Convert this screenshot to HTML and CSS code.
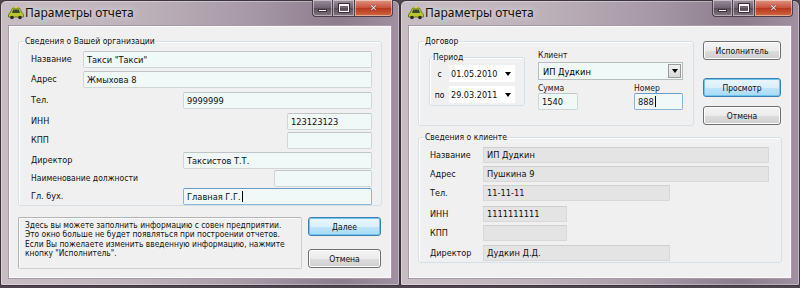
FILE: index.html
```html
<!DOCTYPE html>
<html lang="ru">
<head>
<meta charset="utf-8">
<title>Параметры отчета</title>
<link rel="stylesheet" href="styles.css">
</head>
<body>
<div class="desk">
  <div class="win">
    <div class="titlebar">
      <svg class="appicon" width="16" height="14" viewBox="0 0 16 14">
        <path d="M2 7 L4 3 Q4.5 2 6 2 L10 2 Q11.5 2 12 3 L14 7 Q15.5 7.5 15.5 9 L15.5 11 L0.5 11 L0.5 9 Q0.5 7.5 2 7 Z" fill="#b8c832" stroke="#5a6a10" stroke-width="0.8"/>
        <path d="M4 7 L5.2 3.6 L10.8 3.6 L12 7 Z" fill="#3c4a2a"/>
        <circle cx="4" cy="11.5" r="1.8" fill="#2a2a2a"/>
        <circle cx="12" cy="11.5" r="1.8" fill="#2a2a2a"/>
        <rect x="6.5" y="0.5" width="3" height="1.5" fill="#e8d040"/>
      </svg>
      <span class="title">Параметры отчета</span>
      <div class="ctrls">
        <span class="cb cb-min"><i class="g-min"></i></span>
        <span class="cb cb-max"><i class="g-max"></i></span>
        <span class="cb cb-close"><i class="g-x">✕</i></span>
      </div>
    </div>
    <div class="client client-left">
      <fieldset class="group org">
        <legend>Сведения о Вашей организации</legend>
        <div class="rows">
          <div class="row"><span class="lbl">Название</span><span class="edit w-full">Такси "Такси"</span></div>
          <div class="row"><span class="lbl">Адрес</span><span class="edit w-full">Жмыхова 8</span></div>
          <div class="row"><span class="lbl">Тел.</span><span class="edit w-mid">9999999</span></div>
          <div class="row"><span class="lbl">ИНН</span><span class="edit w-sm">123123123</span></div>
          <div class="row"><span class="lbl">КПП</span><span class="edit w-sm"></span></div>
          <div class="row"><span class="lbl">Директор</span><span class="edit w-mid">Таксистов Т.Т.</span></div>
          <div class="row"><span class="lbl lbl-long">Наименование должности</span><span class="edit w-pos"></span></div>
          <div class="row"><span class="lbl">Гл. бух.</span><span class="edit w-mid focus">Главная Г.Г.<span class="caret"></span></span></div>
        </div>
      </fieldset>
      <div class="bottom">
        <div class="info">Здесь вы можете заполнить информацию с совен предприятии.<br>Это окно больше не будет появляться при построении отчетов.<br>Если Вы пожелаете изменить введенную информацию, нажмите<br>кнопку "Исполнитель".</div>
        <div class="btncol">
          <span class="btn default">Далее</span>
          <span class="btn">Отмена</span>
        </div>
      </div>
    </div>
  </div>

  <div class="win">
    <div class="titlebar">
      <svg class="appicon" width="16" height="14" viewBox="0 0 16 14">
        <path d="M2 7 L4 3 Q4.5 2 6 2 L10 2 Q11.5 2 12 3 L14 7 Q15.5 7.5 15.5 9 L15.5 11 L0.5 11 L0.5 9 Q0.5 7.5 2 7 Z" fill="#b8c832" stroke="#5a6a10" stroke-width="0.8"/>
        <path d="M4 7 L5.2 3.6 L10.8 3.6 L12 7 Z" fill="#3c4a2a"/>
        <circle cx="4" cy="11.5" r="1.8" fill="#2a2a2a"/>
        <circle cx="12" cy="11.5" r="1.8" fill="#2a2a2a"/>
        <rect x="6.5" y="0.5" width="3" height="1.5" fill="#e8d040"/>
      </svg>
      <span class="title">Параметры отчета</span>
      <div class="ctrls">
        <span class="cb cb-min"><i class="g-min"></i></span>
        <span class="cb cb-max"><i class="g-max"></i></span>
        <span class="cb cb-close"><i class="g-x">✕</i></span>
      </div>
    </div>
    <div class="client client-right">
      <div class="top">
        <fieldset class="group contract">
          <legend>Договор</legend>
          <div class="contract-body">
            <fieldset class="group period">
              <legend>Период</legend>
              <div class="prow"><span class="plbl">с</span><span class="picker">01.05.2010<span class="arr"></span></span></div>
              <div class="prow"><span class="plbl">по</span><span class="picker">29.03.2011<span class="arr"></span></span></div>
            </fieldset>
            <div class="clientcol">
              <span class="clbl">Клиент</span>
              <span class="combo">ИП Дудкин<span class="dd"><span class="arr"></span></span></span>
              <div class="sumrow">
                <div class="fcol"><span class="clbl">Сумма</span><span class="edit w-sum">1540</span></div>
                <div class="fcol"><span class="clbl">Номер</span><span class="edit w-num focus">888<span class="caret"></span></span></div>
              </div>
            </div>
          </div>
        </fieldset>
        <div class="btncol2">
          <span class="btn">Исполнитель</span>
          <span class="btn default">Просмотр</span>
          <span class="btn">Отмена</span>
        </div>
      </div>
      <fieldset class="group cinfo">
        <legend>Сведения о клиенте</legend>
        <div class="rows2">
          <div class="row"><span class="lbl">Название</span><span class="ro r-full">ИП Дудкин</span></div>
          <div class="row"><span class="lbl">Адрес</span><span class="ro r-full">Пушкина 9</span></div>
          <div class="row"><span class="lbl">Тел.</span><span class="ro r-mid">11-11-11</span></div>
          <div class="row"><span class="lbl">ИНН</span><span class="ro r-sm">1111111111</span></div>
          <div class="row"><span class="lbl">КПП</span><span class="ro r-sm"></span></div>
          <div class="row"><span class="lbl">Директор</span><span class="ro r-mid">Дудкин Д.Д.</span></div>
        </div>
      </fieldset>
    </div>
  </div>
</div>
</body>
</html>
```
FILE: styles.css
```css
* { box-sizing: border-box; }
html, body { margin: 0; padding: 0; }
body {
  width: 800px;
  height: 288px;
  overflow: hidden;
  background: #4e464e;
  font-family: "DejaVu Sans Condensed", "DejaVu Sans", sans-serif;
  font-size: 8.5px;
  color: #000;
}
.desk { display: flex; width: 800px; height: 288px; }

.win {
  width: 400px;
  height: 286px;
  padding: 0 7px 0 7px;
  display: flex;
  flex-direction: column;
  border: 1px solid #3e343e;
  border-radius: 6px 6px 2px 2px;
  box-shadow: inset 0 0 0 1px rgba(255,255,255,0.35);
  background:
    linear-gradient(to right, #c6bec2 0%, #bdb2ba 35%, #a596a4 65%, #8c7c8c 85%, #a090a0 100%);
}

.titlebar {
  height: 24px;
  display: flex;
  align-items: flex-start;
  flex: none;
}
.appicon { margin: 5px 0 0 0; flex: none; }
.title {
  margin: 5px 0 0 1px;
  font-family: "Noto Sans", "Open Sans", sans-serif;
  font-size: 12px;
  line-height: 14px;
  color: #101010;
  text-shadow: 0 0 6px rgba(255,255,255,0.9);
}
.ctrls { margin-left: auto; display: flex; margin-top: -1px; margin-right: -1px; }
.cb {
  height: 17px;
  display: flex;
  align-items: center;
  justify-content: center;
  border: 1px solid #4a3e4a;
  border-top: none;
  box-shadow: inset 0 0 0 1px rgba(255,255,255,0.45);
}
.cb-min {
  width: 21px;
  border-radius: 0 0 0 4px;
  background: linear-gradient(#9a8e9a, #6e626e 50%, #5a4e5a 51%, #807480);
}
.cb-max {
  width: 22px;
  border-left: none;
  background: linear-gradient(#9a8e9a, #6e626e 50%, #5a4e5a 51%, #807480);
}
.cb-close {
  width: 38px;
  border-left: none;
  border-radius: 0 0 4px 0;
  background: linear-gradient(#e09484, #c8503c 50%, #b63620 51%, #d2683e);
}
.g-min { width: 9px; height: 3px; background: #fff; border: 1px solid #3a303a; margin-top: 5px; }
.g-max { width: 10px; height: 8px; border: 1px solid #fff; border-top-width: 2px; outline: 1px solid #3a303a; }
.g-x { font-style: normal; color: #fff; font-weight: bold; font-size: 9px; line-height: 9px; font-family: "DejaVu Sans", sans-serif; text-shadow: 0 0 1px #3a1008, 0 0 1px #3a1008; }

.client {
  flex: none;
  height: 254px;
  background: #f0f0f0;
  border: 1px solid #a69aa6;
  box-shadow: inset 0 0 0 1px #fbfbfb;
  padding: 10px 10px 0 9px;
}

/* group boxes */
.group {
  margin: 0;
  border: 1px solid #d5dfe5;
  border-radius: 3px;
  box-shadow: 0 1px 0 #fff inset, 1px 0 0 #fff inset;
  padding: 0;
  min-width: 0;
}
.group legend {
  padding: 0 1px;
  margin-left: 5px;
  line-height: 11px;
  color: #101010;
}

/* left window */
.org { width: 364px; height: 170px; }
.rows {
  padding: 4px 9px 0 12px;
  display: grid;
  grid-template-rows: 20px 21px 21px 19px 20px 18px 18px 17px;
}
.row { display: flex; align-items: flex-start; }
.lbl { flex: none; line-height: 17px; color: #111; font-size: 9px; }
.lbl-long { font-size: 8.5px; }
.edit {
  flex: none;
  margin-left: auto;
  height: 17px;
  background: #f0f8f8;
  border: 1px solid #d0d6d6;
  border-top-color: #c0c6c8;
  border-radius: 2px;
  line-height: 15px;
  padding: 0 3px;
  white-space: nowrap;
  color: #101010;
  font-size: 9.2px;
}
.w-full { width: 289px; }
.w-mid { width: 189px; }
.w-sm { width: 85px; }
.w-pos { width: 98px; }
.focus { border-color: #8ab4d8; border-top-color: #6a9cc8; }
.caret { display: inline-block; width: 1px; height: 11px; background: #000; vertical-align: -2px; margin-left: 1px; }

.bottom { display: flex; margin-top: 11px; }
.info {
  width: 284px;
  height: 52px;
  border: 1px solid #b4b4b4;
  border-right-color: #cfcfcf;
  border-bottom-color: #cfcfcf;
  border-radius: 2px;
  box-shadow: inset 1px 1px 0 #fbfbfb;
  padding: 3px 0 0 6px;
  font-size: 8.35px;
  line-height: 9.4px;
  color: #101010;
  white-space: nowrap;
}
.btncol { margin-left: auto; display: flex; flex-direction: column; gap: 13px; }
.btn {
  width: 73px;
  height: 19px;
  display: flex;
  align-items: center;
  justify-content: center;
  border: 1px solid #707070;
  border-radius: 3px;
  background: linear-gradient(#f4f4f4, #ebebeb 50%, #dddddd 51%, #cfcfcf);
  box-shadow: inset 0 0 0 1px #fcfcfc;
  color: #101010;
}
.btn.default {
  border-color: #3c7fb1;
  background: linear-gradient(#eaf6fd, #d9f0fc 50%, #bee6fd 51%, #a7d9f5);
  box-shadow: inset 0 0 0 1px #6ec6ee;
}

/* right window */
.client-right { padding-top: 10px; }
.top { display: flex; }
.contract { width: 278px; height: 90px; }
.contract-body { display: flex; padding: 0 10px; }
.period { flex: none; width: 96px; height: 54px; margin-top: 5px; }
.period legend { margin-left: 2px; }
.prow { display: flex; align-items: center; height: 17px; margin-top: 2px; }
.prow + .prow { margin-top: 4px; }
.plbl { width: 19px; text-align: center; }
.picker {
  margin-left: auto;
  margin-right: 9px;
  width: 66px;
  height: 17px;
  background: #fff;
  display: flex;
  align-items: center;
  padding-left: 2px;
  font-size: 9px;
  color: #101010;
}
.arr {
  margin-left: auto;
  margin-right: 4px;
  width: 0; height: 0;
  border-left: 3.5px solid transparent;
  border-right: 3.5px solid transparent;
  border-top: 4px solid #000;
}
.clientcol { margin-left: 13px; display: flex; flex-direction: column; width: 147px; }
.clbl { line-height: 10px; color: #1a1a1a; }
.clientcol > .clbl { margin-top: 3px; }
.combo {
  margin-top: 2px;
  height: 18px;
  background: #f0f8f8;
  border: 1px solid #b8bcbc;
  display: flex;
  align-items: center;
  padding-left: 4px;
  font-size: 9.2px;
}
.dd {
  margin-left: auto;
  margin-right: 1px;
  width: 13px;
  height: 14px;
  border: 1px solid #9a9a9a;
  background: linear-gradient(#f0f0f0, #d8d8d8);
  display: flex;
  align-items: center;
  justify-content: center;
}
.dd .arr { margin: 0; }
.sumrow { display: flex; justify-content: space-between; margin-top: 3px; }
.fcol { display: flex; flex-direction: column; }
.fcol .edit { margin-left: 0; margin-top: 0; height: 17px; }
.w-sum { width: 40px; }
.w-num { width: 49px; }

.btncol2 { margin-left: 9px; display: flex; flex-direction: column; padding-top: 5px; }
.btncol2 .btn { width: 78px; }
.btncol2 .btn:nth-child(2) { margin-top: 18px; }
.btncol2 .btn:nth-child(3) { margin-top: 9px; }

.cinfo { margin-top: 6px; width: 364px; height: 131px; }
.rows2 { padding: 4px 12px 0 11px; display: grid; grid-template-rows: 19px 19px 21px 19px 20px 16px; }
.ro {
  flex: none;
  margin-left: auto;
  height: 16px;
  background: #e4e4e4;
  border: 1px solid #d8d8d8;
  border-top-color: #cfcfcf;
  line-height: 14px;
  padding: 0 3px;
  color: #101010;
  font-size: 9.2px;
}
.rows2 .lbl { line-height: 16px; }
.r-full { width: 286px; }
.r-mid { width: 187px; margin-right: 99px; }
.r-sm { width: 84px; margin-right: 202px; }
```
